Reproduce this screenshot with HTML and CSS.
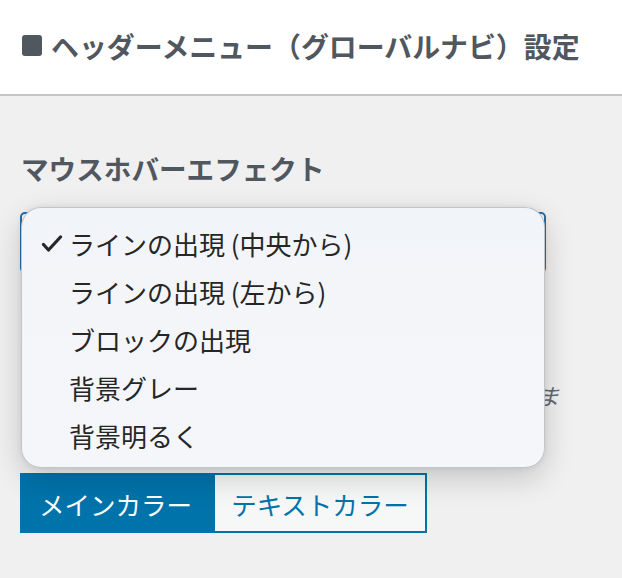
FILE: index.html
```html
<!DOCTYPE html>
<html lang="ja">
<head>
<meta charset="utf-8">
<link rel="stylesheet" href="styles.css">
</head>
<body>
<header class="header">
  <h3 class="section-title"><span class="square"></span>ヘッダーメニュー（グローバルナビ）設定</h3>
</header>
<main class="content">
  <div class="control-title">マウスホバーエフェクト</div>
  <div class="select">ラインの出現（中央から）</div>
  <div class="control-title second">ホバーエフェクトのカラー設定</div>
  <p class="desc">ホバー色をメインカラーかテキストカラーから選べます。</p>
  <div class="btn-group">
    <button class="btn active">メインカラー</button>
    <button class="btn">テキストカラー</button>
  </div>
</main>
<div class="menu">
  <div class="item"><svg class="check" width="22" height="18" viewBox="0 0 22 18"><path d="M2.5 9.5 L7.5 15 L19.5 2" fill="none" stroke="#262626" stroke-width="3.2" stroke-linecap="round" stroke-linejoin="round"/></svg>ラインの出現 (中央から)</div>
  <div class="item">ラインの出現 (左から)</div>
  <div class="item">ブロックの出現</div>
  <div class="item">背景グレー</div>
  <div class="item">背景明るく</div>
</div>
</body>
</html>
```
FILE: styles.css
```css
html, body {
  margin: 0;
  padding: 0;
}
body {
  background: #f0f0f1;
  font-family: "Noto Sans CJK JP", "Noto Sans", sans-serif;
  width: 622px;
  height: 578px;
  overflow: hidden;
  position: relative;
}
.header {
  background: #fff;
  height: 94px;
  border-bottom: 2px solid #c3c4c7;
  display: flex;
  align-items: center;
  padding-left: 22px;
  box-sizing: content-box;
}
.section-title {
  margin: 0 0 3px;
  font-size: 27.9px;
  font-weight: 700;
  color: #50575e;
  line-height: 40px;
  display: flex;
  align-items: center;
}
.square {
  display: inline-block;
  width: 20px;
  height: 21px;
  background: #50575e;
  border-radius: 3px;
  margin-right: 9px;
}
.content {
  padding: 52px 0 0 20px;
}
.control-title {
  font-size: 27.6px;
  font-weight: 700;
  color: #50575e;
  line-height: 40px;
  padding-left: 1px;
}
.select {
  margin-top: 24px;
  width: 526px;
  height: 61px;
  box-sizing: border-box;
  border: 2px solid #2271b1;
  border-radius: 5px;
  background: #fff;
  color: #2271b1;
  font-size: 26px;
  line-height: 57px;
  padding-left: 18px;
}
.second {
  margin-top: 52px;
  padding-left: 18px;
}
.desc {
  margin: 12px 0 0;
  width: 542px;
  font-size: 22.5px;
  line-height: 36px;
  font-style: italic;
  color: #646970;
}
.btn-group {
  margin-top: 24px;
  display: flex;
}
.btn {
  height: 60px;
  box-sizing: border-box;
  border: 2px solid #0073aa;
  background: #f6f7f7;
  color: #0073aa;
  font-family: inherit;
  font-size: 25.5px;
  padding: 0;
  width: 214px;
  margin: 0;
}
.btn.active {
  width: 193px;
  padding-right: 2px;
  background: #0073aa;
  color: #fff;
}
.menu {
  position: absolute;
  left: 21px;
  top: 207px;
  width: 524px;
  height: 261px;
  box-sizing: border-box;
  padding-top: 12px;
  border-radius: 20px;
  background: linear-gradient(180deg, #f1f4f9 0%, #f3f5f9 25%, #f4f6f9 100%);
  border: 1px solid rgba(0, 0, 0, 0.2);
  box-shadow: 0 10px 30px rgba(0, 0, 0, 0.18), 0 0 6px rgba(0, 0, 0, 0.08);
}
.item {
  height: 48px;
  line-height: 48px;
  font-size: 26px;
  color: #262626;
  padding-left: 47px;
  position: relative;
}
.check {
  position: absolute;
  left: 19px;
  top: 15px;
}
```
